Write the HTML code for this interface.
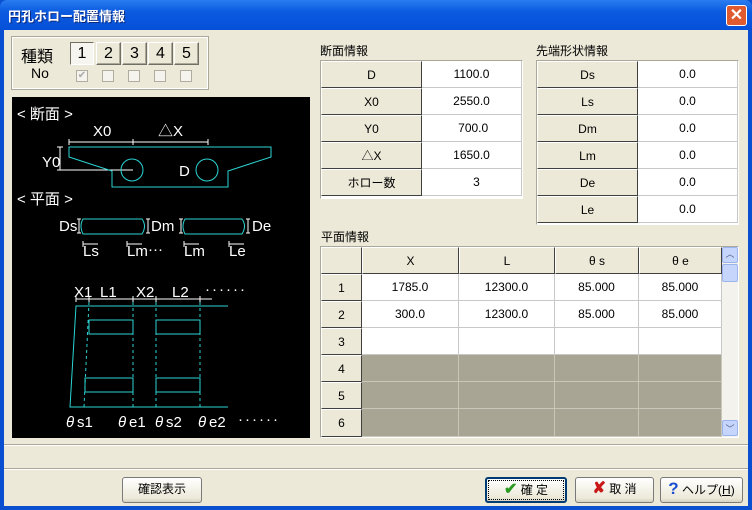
<!DOCTYPE html>
<html><head><meta charset="utf-8"><style>
*{margin:0;padding:0;box-sizing:border-box}
body{width:752px;height:510px;overflow:hidden;background:#0a4fd0;font-family:"Liberation Sans","Noto Sans CJK JP",sans-serif;font-size:12px;color:#000;position:relative}
.a{position:absolute}
#title{left:0;top:0;width:752px;height:30px;background:linear-gradient(#2a7cf0,#0a5ae0 40%,#0650d8);border-radius:7px 7px 0 0}
#title span{position:absolute;left:8px;top:6px;color:#fff;font-weight:bold;font-size:13px;text-shadow:1px 1px #0a2a80}
#close{left:726px;top:5px;width:21px;height:21px;background:#e05a30;border:1px solid #fff;border-radius:3px;color:#fff;font-size:16px;font-weight:bold;text-align:center;line-height:19px}
#client{left:4px;top:30px;width:744px;height:476px;background:#ece9d8}
.grp{border:1px solid #fff;outline:1px solid #aca899;}
.btn{background:#ece9d8;border:1px solid;border-color:#fff #716f64 #716f64 #fff;box-shadow:inset -1px -1px #aca899;text-align:center}
.cb{width:12px;height:12px;border:1px solid #b0ad9f;background:#f4f3ee}
.cell{position:absolute;height:27px;line-height:27px;text-align:center;font-size:12px}
.hd{background:#ece9d8;border:1px solid;border-color:#fff #404040 #404040 #fff}
.val{background:#fff;border-right:1px solid #c8c8c8;border-bottom:1px solid #c8c8c8}
.gray{background:#a9a595;border-right:1px solid #c9c6ba;border-bottom:1px solid #c9c6ba}
.pb{position:absolute;height:26px;line-height:22px;font-size:12px;border:1px solid #003c74;border-radius:3px;background:linear-gradient(#fff,#ece9d8 85%,#d6d0c0);text-align:center}
</style></head><body>
<div class="a" id="title"><span>円孔ホロー配置情報</span></div>
<div class="a" id="close">✕</div>
<div class="a" id="client"></div>

<!-- type group -->
<div class="a grp" style="left:12px;top:37px;width:196px;height:52px"></div>
<div class="a" style="left:21px;top:43px;font-size:16px">種類</div>
<div class="a" style="left:31px;top:65px;font-size:14px">No</div>
<div class="a btn" style="left:70px;top:42px;width:24px;height:23px;font-size:16px;line-height:22px;background:#f6f5f0;border-color:#716f64 #fff #fff #716f64;box-shadow:none">1</div>
<div class="a btn" style="left:96px;top:42px;width:25px;height:23px;font-size:16px;line-height:22px">2</div>
<div class="a btn" style="left:122px;top:42px;width:25px;height:23px;font-size:16px;line-height:22px">3</div>
<div class="a btn" style="left:148px;top:42px;width:25px;height:23px;font-size:16px;line-height:22px">4</div>
<div class="a btn" style="left:174px;top:42px;width:25px;height:23px;font-size:16px;line-height:22px">5</div>
<div class="a cb" style="left:76px;top:70px;color:#aaa;font-size:10px;line-height:10px;text-align:center">✔</div>
<div class="a cb" style="left:102px;top:70px"></div>
<div class="a cb" style="left:128px;top:70px"></div>
<div class="a cb" style="left:154px;top:70px"></div>
<div class="a cb" style="left:180px;top:70px"></div>

<!-- diagram -->
<svg class="a" style="left:12px;top:97px" width="298" height="341" viewBox="12 97 298 341">
<rect x="12" y="97" width="298" height="341" fill="#000"/>
<g fill="#fff" font-family="Liberation Sans,Noto Sans CJK JP,sans-serif" font-size="15">
<text x="17" y="119">&lt; 断面 &gt;</text>
<text x="93" y="136">X0</text><text x="158" y="136">△X</text>
<text x="42" y="167">Y0</text><text x="179" y="176">D</text>
<text x="17" y="204">&lt; 平面 &gt;</text>
<text x="59" y="231">Ds</text><text x="151" y="231">Dm</text><text x="252" y="231">De</text>
<text x="83" y="256">Ls</text><text x="127" y="256">Lm</text><text x="148" y="254">···</text><text x="184" y="256">Lm</text><text x="229" y="256">Le</text>
<text x="74" y="297">X1</text><text x="100" y="297">L1</text><text x="136" y="297">X2</text><text x="172" y="297">L2</text>
<text x="205" y="294" letter-spacing="2">······</text>
<text x="66" y="427" font-style="italic">θ</text><text x="77" y="427">s1</text>
<text x="118" y="427" font-style="italic">θ</text><text x="129" y="427">e1</text>
<text x="155" y="427" font-style="italic">θ</text><text x="166" y="427">s2</text>
<text x="198" y="427" font-style="italic">θ</text><text x="209" y="427">e2</text>
<text x="238" y="424" letter-spacing="2">······</text>
</g>
<g stroke="#fff" stroke-width="1" fill="none">
<path d="M69 142H208M69 139v6M133 139v6M208 139v6"/>
<path d="M60 147V170M57 147h6M57 170h6M60 170H133"/>
<path d="M76 306v0M76 299H212M76 296v6M89 296v6M133 296v6M156 296v6M200 296v6"/>
<path d="M79 219v14M77 219h4M77 233h4M148 219v14M146 219h4M146 233h4M181 219v14M179 219h4M179 233h4M248 219v14M246 219h4M246 233h4"/>
<path d="M83 241v6M83 244H98M127 241v6M127 244h15M184 241v6M184 244h15M229 241v6M229 244h15"/>
</g>
<g stroke="#2cd4d4" stroke-width="1" fill="none">
<path d="M69 147H271V157L228 171V187H112V171L69 157Z"/>
<circle cx="132" cy="170" r="11"/><circle cx="207" cy="170" r="11"/>
<path d="M83 219H142Q147 226 142 234H83Q79 226 83 219Z"/>
<path d="M185 219H242Q247 226 242 234H185Q181 226 185 219Z"/>
<path d="M228 306H76L70 407H228"/>
<rect x="89" y="320" width="44" height="14"/><rect x="156" y="320" width="44" height="14"/>
<rect x="85" y="378" width="48" height="14"/><rect x="156" y="378" width="44" height="14"/>
</g>
<g stroke="#2cd4d4" stroke-width="1" stroke-dasharray="3,3">
<path d="M89 302L84 407M133 302V407M156 302V407M200 302V407"/>
</g>
</svg>

<!-- 断面情報 -->
<div class="a" style="left:320px;top:42px">断面情報</div>
<div class="a" style="left:320px;top:60px;width:203px;height:139px;border:1px solid;border-color:#aca899 #fff #fff #aca899;background:#fff"></div>
<div class="cell hd" style="left:321px;top:61px;width:101px">D</div><div class="cell val" style="left:422px;top:61px;width:100px">1100.0</div>
<div class="cell hd" style="left:321px;top:88px;width:101px">X0</div><div class="cell val" style="left:422px;top:88px;width:100px">2550.0</div>
<div class="cell hd" style="left:321px;top:115px;width:101px">Y0</div><div class="cell val" style="left:422px;top:115px;width:100px">&nbsp;700.0</div>
<div class="cell hd" style="left:321px;top:142px;width:101px">△X</div><div class="cell val" style="left:422px;top:142px;width:100px">1650.0</div>
<div class="cell hd" style="left:321px;top:169px;width:101px">ホロー数</div><div class="cell val" style="left:422px;top:169px;width:100px">&nbsp;&nbsp;&nbsp;3</div>

<!-- 先端形状情報 -->
<div class="a" style="left:536px;top:42px">先端形状情報</div>
<div class="a" style="left:536px;top:60px;width:203px;height:165px;border:1px solid;border-color:#aca899 #fff #fff #aca899;background:#fff"></div>
<div class="cell hd" style="left:537px;top:61px;width:101px">Ds</div><div class="cell val" style="left:638px;top:61px;width:100px">0.0</div>
<div class="cell hd" style="left:537px;top:88px;width:101px">Ls</div><div class="cell val" style="left:638px;top:88px;width:100px">0.0</div>
<div class="cell hd" style="left:537px;top:115px;width:101px">Dm</div><div class="cell val" style="left:638px;top:115px;width:100px">0.0</div>
<div class="cell hd" style="left:537px;top:142px;width:101px">Lm</div><div class="cell val" style="left:638px;top:142px;width:100px">0.0</div>
<div class="cell hd" style="left:537px;top:169px;width:101px">De</div><div class="cell val" style="left:638px;top:169px;width:100px">0.0</div>
<div class="cell hd" style="left:537px;top:196px;width:101px">Le</div><div class="cell val" style="left:638px;top:196px;width:100px">0.0</div>

<!-- 平面情報 -->
<div class="a" style="left:321px;top:228px">平面情報</div>
<div class="a" style="left:320px;top:246px;width:419px;height:192px;border:1px solid;border-color:#aca899 #fff #fff #aca899;background:#ece9d8"></div>
<div class="cell hd" style="left:321px;top:247px;width:41px"></div>
<div class="cell hd" style="left:362px;top:247px;width:97px">X</div>
<div class="cell hd" style="left:459px;top:247px;width:96px">L</div>
<div class="cell hd" style="left:555px;top:247px;width:84px">θ s</div>
<div class="cell hd" style="left:639px;top:247px;width:83px">θ e</div>

<div class="cell hd" style="left:321px;top:274px;width:41px">1</div>
<div class="cell val" style="left:362px;top:274px;width:97px">1785.0</div><div class="cell val" style="left:459px;top:274px;width:96px">12300.0</div><div class="cell val" style="left:555px;top:274px;width:84px">85.000</div><div class="cell val" style="left:639px;top:274px;width:83px">85.000</div>
<div class="cell hd" style="left:321px;top:301px;width:41px">2</div>
<div class="cell val" style="left:362px;top:301px;width:97px">300.0</div><div class="cell val" style="left:459px;top:301px;width:96px">12300.0</div><div class="cell val" style="left:555px;top:301px;width:84px">85.000</div><div class="cell val" style="left:639px;top:301px;width:83px">85.000</div>
<div class="cell hd" style="left:321px;top:328px;width:41px">3</div>
<div class="cell val" style="left:362px;top:328px;width:97px"></div><div class="cell val" style="left:459px;top:328px;width:96px"></div><div class="cell val" style="left:555px;top:328px;width:84px"></div><div class="cell val" style="left:639px;top:328px;width:83px"></div>
<div class="cell hd" style="left:321px;top:355px;width:41px">4</div>
<div class="cell gray" style="left:362px;top:355px;width:97px"></div><div class="cell gray" style="left:459px;top:355px;width:96px"></div><div class="cell gray" style="left:555px;top:355px;width:84px"></div><div class="cell gray" style="left:639px;top:355px;width:83px"></div>
<div class="cell hd" style="left:321px;top:382px;width:41px">5</div>
<div class="cell gray" style="left:362px;top:382px;width:97px"></div><div class="cell gray" style="left:459px;top:382px;width:96px"></div><div class="cell gray" style="left:555px;top:382px;width:84px"></div><div class="cell gray" style="left:639px;top:382px;width:83px"></div>
<div class="cell hd" style="left:321px;top:409px;width:41px;height:28px">6</div>
<div class="cell gray" style="left:362px;top:409px;width:97px;height:28px"></div><div class="cell gray" style="left:459px;top:409px;width:96px;height:28px"></div><div class="cell gray" style="left:555px;top:409px;width:84px;height:28px"></div><div class="cell gray" style="left:639px;top:409px;width:83px;height:28px"></div>
<!-- scrollbar -->
<div class="a" style="left:722px;top:247px;width:16px;height:190px;background:#f3f2ec"></div>
<div class="a" style="left:722px;top:247px;width:16px;height:16px;background:#c5d5fb;border:1px solid #9bb4ee;border-radius:2px;color:#4d6185;font-size:9px;text-align:center;line-height:13px">︿</div>
<div class="a" style="left:722px;top:264px;width:16px;height:18px;background:#c5d5fb;border:1px solid #9bb4ee;border-radius:2px"></div>
<div class="a" style="left:722px;top:420px;width:16px;height:16px;background:#c5d5fb;border:1px solid #9bb4ee;border-radius:2px;color:#4d6185;font-size:9px;text-align:center;line-height:16px">﹀</div>

<!-- status -->
<div class="a" style="left:4px;top:444px;width:744px;height:1px;background:#aca899"></div>
<div class="a" style="left:4px;top:445px;width:744px;height:1px;background:#fff"></div>
<div class="a" style="left:4px;top:468px;width:744px;height:1px;background:#aca899"></div>
<div class="a" style="left:4px;top:469px;width:744px;height:1px;background:#fff"></div>

<div class="pb" style="left:122px;top:477px;width:80px;border-color:#7a7a7a">確認表示</div>
<div class="pb" style="left:485px;top:477px;width:82px;border:2px solid #003c74"><span style="border:1px dotted #000;display:block;margin:1px;line-height:18px"><b style="color:#2a9a20;font-size:16px">✔</b> 確 定</span></div>
<div class="pb" style="left:575px;top:477px;width:79px;border-color:#7a7a7a"><b style="color:#c81818;font-size:16px">✘</b> 取 消</div>
<div class="pb" style="left:660px;top:477px;width:83px;border-color:#7a7a7a"><b style="color:#1a4fd0;font-size:17px">?</b> ヘルプ(<u>H</u>)</div>
</body></html>
